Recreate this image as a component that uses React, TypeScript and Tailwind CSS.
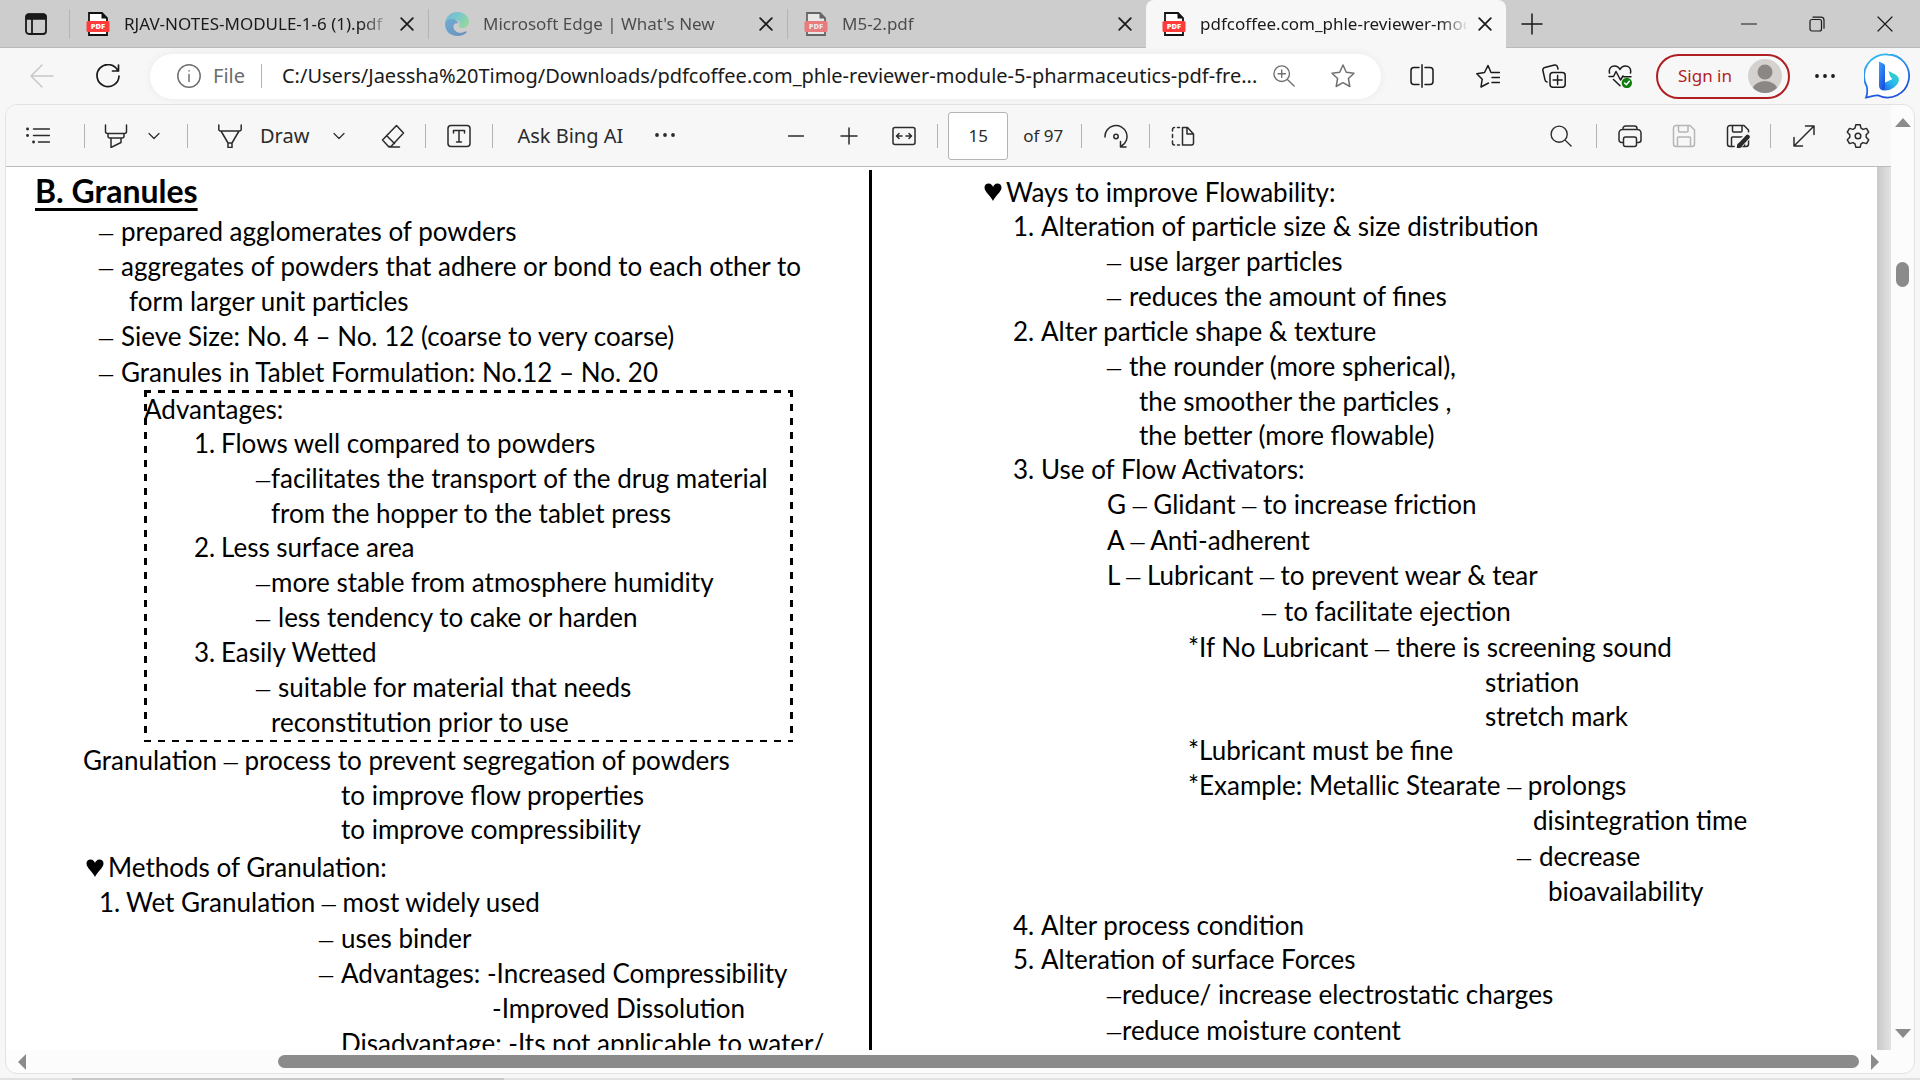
import type { ReactNode } from 'react';

type IconProps = { children: ReactNode; className?: string; box?: string };

const Icon = ({ children, className = 'size-6', box = '0 0 24 24' }: IconProps) => (
  <svg
    viewBox={box}
    fill="none"
    stroke="currentColor"
    strokeWidth="1.5"
    strokeLinecap="round"
    strokeLinejoin="round"
    aria-hidden="true"
    className={`${className} shrink-0`}
  >
    {children}
  </svg>
);

const CloseIcon = () => (
  <Icon className="size-3.5">
    <path d="M2 2l20 20M22 2L2 22" strokeWidth="3" />
  </Icon>
);

const Chevron = () => (
  <Icon className="size-3" box="0 0 12 12">
    <path d="M1 3.5l5 5 5-5" strokeWidth="1.2" />
  </Icon>
);

const PdfIcon = () => (
  <svg viewBox="0 0 24 24" className="size-6 shrink-0" aria-hidden="true">
    <path d="M3 1h13l5 5v17H3z" fill="#fff" stroke="#111" strokeWidth="1.8" />
    <path d="M15.500 1v5.500H21z" fill="#111" />
    <rect x="0.5" y="9" width="23" height="11" rx="1.5" fill="#ff3b3b" />
    <text x="12" y="17" textAnchor="middle" fontSize="7.5" fontWeight="800" fontFamily="Open Sans, sans-serif" fill="#fff">
      PDF
    </text>
  </svg>
);

const EdgeIcon = () => (
  <svg viewBox="0 0 24 24" className="size-6 shrink-0" aria-hidden="true">
    <defs>
      <linearGradient id="edgeTop" x1="0" y1="0" x2="1" y2="0.6">
        <stop offset="0" stopColor="#2d9fdc" />
        <stop offset="0.5" stopColor="#36c3cf" />
        <stop offset="1" stopColor="#66e07a" />
      </linearGradient>
      <linearGradient id="edgeLow" x1="0" y1="0" x2="1" y2="1">
        <stop offset="0" stopColor="#2394dc" />
        <stop offset="1" stopColor="#1c5ba5" />
      </linearGradient>
    </defs>
    <path d="M0 11.500C1 4 6 0 12 0c7 0 12 4.500 12 9.500 0 4-3 6.500-6.500 6.500-3 0-4.200-1-3.500-2 1.500-2.500.5-6-4-6C5 8 1.500 9 0 11.500z" fill="url(#edgeTop)" />
    <path d="M0 12c.5-4 4.500-5.500 8-5 3 .4 5 2.500 5 4.500-3-1-5 1-4.500 4 .7 4 5 6 9 5 2.500-.7 4.500-1.500 4.500-.5-2 2.700-5.500 4-9.500 4C5 24 0 19 0 12z" fill="url(#edgeLow)" />
  </svg>
);

const BingIcon = () => (
  <svg viewBox="0 0 46 46" className="size-[46px] shrink-0" aria-hidden="true">
    <defs>
      <linearGradient id="bingRing" x1="0" y1="0" x2="0.4" y2="1">
        <stop offset="0" stopColor="#35c5f5" />
        <stop offset="1" stopColor="#1d50dc" />
      </linearGradient>
      <linearGradient id="bingStem" x1="0" y1="0" x2="0.6" y2="1">
        <stop offset="0" stopColor="#38a5ff" />
        <stop offset="1" stopColor="#1c50dd" />
      </linearGradient>
      <linearGradient id="bingBowl" x1="1" y1="0" x2="0" y2="1">
        <stop offset="0" stopColor="#36dfb9" />
        <stop offset="0.5" stopColor="#27b7ee" />
        <stop offset="1" stopColor="#1b53dd" />
      </linearGradient>
    </defs>
    <path d="M23.500 1.500a21.500 21.500 0 1 1-9 41c-4-.5-8 1.500-12.500 2 1.800-4 1.500-7 .8-11A21.500 21.500 0 0 1 23.500 1.500z" fill="#fff" stroke="url(#bingRing)" strokeWidth="1.8" />
    <path d="M24.500 18l5.500 2.800c4.500 2 6 5.200 4.200 9-2.600 4.700-9 8.200-13.700 7.700-3-.5-4.500-3-4.500-5.500l12.500-6c-2-1.500-3-4-4-8z" fill="url(#bingBowl)" />
    <path d="M15 8.500l4.500 2.200c1 .5 1.500 1.300 1.500 2.500V33c0 2-.5 3.500-1.500 4.500-3-.2-4.500-2.300-4.500-4.500z" fill="url(#bingStem)" />
  </svg>
);

const Sep = ({ className = '' }: { className?: string }) => (
  <div className={`h-6 w-px shrink-0 bg-[#b4b4b4] ${className}`} />
);

type TabProps = { title: string; icon: ReactNode; width: string; dim?: boolean };

const Tab = ({ title, icon, width, dim }: TabProps) => (
  <div className={`flex h-full shrink-0 items-center pl-4 ${width}`}>
    <span className={dim ? 'opacity-55' : ''}>{icon}</span>
    <span
      className={`ml-3.5 min-w-0 flex-1 overflow-hidden bg-clip-text whitespace-nowrap text-transparent ${
        dim ? 'bg-[#4a4a4a]' : 'bg-linear-to-r from-[#1a1a1a] from-90% to-[#1a1a1a]/10'
      }`}
    >
      {title}
    </span>
    <button type="button" aria-label={`Close ${title}`} className="mr-3.5 ml-3 shrink-0 text-[#1a1a1a]">
      <CloseIcon />
    </button>
  </div>
);

const TabStrip = () => (
  <header className="flex h-12 shrink-0 items-stretch bg-[#cdcdcd] text-[17px] text-[#1a1a1a] shadow-[inset_0_-1px_0_#b9b9b9]">
    <button type="button" aria-label="Tab actions menu" className="flex w-[69px] shrink-0 items-center pl-6">
      <Icon>
        <rect x="2" y="2.500" width="20" height="19.500" rx="3" strokeWidth="1.8" />
        <path d="M2 7V5a3 3 0 0 1 3-3h14a3 3 0 0 1 3 3v2z" fill="currentColor" />
        <path d="M8 7v15" strokeWidth="1.8" />
      </Icon>
    </button>
    <Sep className="h-[30px] self-center bg-[#808080]" />
    <Tab title="RJAV-NOTES-MODULE-1-6 (1).pdf" icon={<PdfIcon />} width="w-[358px]" />
    <Sep className="h-[30px] self-center bg-[#808080]" />
    <Tab title="Microsoft Edge | What's New" icon={<EdgeIcon />} width="w-[358px]" dim />
    <Sep className="h-[30px] self-center bg-[#808080]" />
    <Tab title="M5-2.pdf" icon={<PdfIcon />} width="w-[358px]" dim />
    <div className="h-full shrink-0 rounded-t-lg bg-[#f7f7f7]">
      <Tab title="pdfcoffee.com_phle-reviewer-module" icon={<PdfIcon />} width="w-[360px]" />
    </div>
    <button type="button" aria-label="New tab" className="ml-3.5 shrink-0">
      <Icon>
        <path d="M12 2v20M2 12h20" />
      </Icon>
    </button>
    <div className="ml-auto flex items-center gap-[52px] pr-[27px]">
      <button type="button" aria-label="Minimize">
        <Icon className="size-4" box="0 0 16 16">
          <path d="M0 8h16" strokeWidth="1.2" />
        </Icon>
      </button>
      <button type="button" aria-label="Restore">
        <Icon className="size-4" box="0 0 16 16">
          <rect x="1" y="3.500" width="11.500" height="11.500" rx="2" strokeWidth="1.2" />
          <path d="M4 1.200h8a3 3 0 0 1 3 3v8" strokeWidth="1.2" />
        </Icon>
      </button>
      <button type="button" aria-label="Close window">
        <Icon className="size-4" box="0 0 16 16">
          <path d="M1 1l14 14M15 1L1 15" strokeWidth="1.2" />
        </Icon>
      </button>
    </div>
  </header>
);

const starPath = 'M12 1l3.300 7.200 7.700 1-5.600 5.300 1.400 8L12 18.700 5.200 22.500l1.400-8L1 9.200l7.700-1z';

const AddressRow = () => (
  <div className="flex h-14 shrink-0 items-center pr-2.5 pl-[30px] text-[#1a1a1a]">
    <button type="button" aria-label="Back" className="text-[#c8c8c8]">
      <Icon>
        <path d="M23 12H1M12 1L1 12l11 11" />
      </Icon>
    </button>
    <button type="button" aria-label="Refresh" className="ml-[42px]">
      <Icon>
        <path d="M22 7A11 11 0 1 0 23 12M22.500 1v6h-6" strokeWidth="1.7" />
      </Icon>
    </button>
    <div className="ml-[30px] flex h-[45px] min-w-0 flex-1 items-center rounded-full bg-white pr-[26px] pl-[27px] shadow-[0_0_8px_rgba(0,0,0,0.06)]">
      <Icon className="size-6 text-[#707070]">
        <circle cx="12" cy="12" r="11.200" />
        <path d="M12 10.500v7M12 6.800v.2" />
      </Icon>
      <span className="ml-3 text-xl text-[#6b6b6b]">File</span>
      <Sep className="ml-4 bg-[#8c8c8c]" />
      <input
        aria-label="Address"
        defaultValue="C:/Users/Jaessha%20Timog/Downloads/pdfcoffee.com_phle-reviewer-module-5-pharmaceutics-pdf-fre..."
        className="ml-5 min-w-0 flex-1 bg-transparent text-xl outline-none"
      />
      <button type="button" aria-label="Zoom" className="ml-4 text-[#707070]">
        <Icon className="size-[22px]">
          <circle cx="9.500" cy="9.500" r="8.500" />
          <path d="M16 16l7 7M9.500 5.500v8M5.500 9.500h8" />
        </Icon>
      </button>
      <button type="button" aria-label="Add to favorites" className="ml-9 text-[#707070]">
        <Icon>
          <path d={starPath} />
        </Icon>
      </button>
    </div>
    <div className="ml-[29px] flex shrink-0 items-center gap-[42px]">
      <button type="button" aria-label="Split screen">
        <Icon>
          <path d="M12 .8v22.400M9 3.500H4a3 3 0 0 0-3 3v11a3 3 0 0 0 3 3h5M15 3.500h5a3 3 0 0 1 3 3v11a3 3 0 0 1-3 3h-5" />
        </Icon>
      </button>
      <button type="button" aria-label="Favorites">
        <Icon>
          <path d="M16 8.500h7.500M16 13.500h7.500M16 18.500h7.500M15 8.500L12 1.500 8.500 8.500.8 9.800l5.400 5.400L5 23l7.500-4" />
        </Icon>
      </button>
      <button type="button" aria-label="Collections">
        <Icon>
          <rect x="8" y="8.500" width="15.200" height="14.800" rx="3" />
          <path d="M15.600 11.500v9M11.100 16h9M5 18a3 3 0 0 1-2-2.200L.9 6.500A2.500 2.500 0 0 1 2.800 3.500L12.500 1a2.500 2.500 0 0 1 3 2L16 5" />
        </Icon>
      </button>
      <button type="button" aria-label="Browser essentials">
        <Icon>
          <path d="M1.500 9C.5 4 3.500 2 6.500 2c2.500 0 4.500 1.500 5.500 3.500C13 3.500 15 2 17.500 2c3 0 6 2 5 7M1 12.500h4.500L8 7.500l4.500 8.500 2.500-4 1 .8h7M5.500 15.500l6.500 6.300" />
          <circle cx="18.800" cy="19" r="5.200" fill="#107c10" stroke="none" />
          <path d="M16.500 19l1.800 1.800 3-3.600" stroke="#fff" />
        </Icon>
      </button>
    </div>
    <button
      type="button"
      className="ml-6 flex h-[45px] shrink-0 items-center gap-4 rounded-full border-2 border-[#b01e22] pr-1.5 pl-5 text-[17px] text-[#b01e22]"
    >
      Sign in
      <svg viewBox="0 0 34 34" className="size-[34px]" aria-hidden="true">
        <clipPath id="avatarClip">
          <circle cx="17" cy="17" r="17" />
        </clipPath>
        <circle cx="17" cy="17" r="17" fill="#d4d1ce" />
        <circle cx="17" cy="13" r="7.500" fill="#8b8785" />
        <ellipse cx="17" cy="31" rx="12.500" ry="9" fill="#8b8785" clipPath="url(#avatarClip)" />
      </svg>
    </button>
    <button type="button" aria-label="Settings and more" className="ml-[23px] shrink-0">
      <Icon>
        <g fill="currentColor" stroke="none">
          <circle cx="4" cy="12" r="1.900" />
          <circle cx="12" cy="12" r="1.900" />
          <circle cx="20" cy="12" r="1.900" />
        </g>
      </Icon>
    </button>
    <button type="button" aria-label="Discover" className="ml-[27px] shrink-0">
      <BingIcon />
    </button>
  </div>
);

const floppyPath =
  'M1.500 4A2.500 2.500 0 0 1 4 1.500h14l4.500 4.500v14a2.500 2.500 0 0 1-2.500 2.500H4A2.500 2.500 0 0 1 1.500 20zM6.500 1.500V7a1 1 0 0 0 1 1H15a1 1 0 0 0 1-1V1.500M5.500 22.500V14a1 1 0 0 1 1-1h11a1 1 0 0 1 1 1v8.500';

const PdfToolbar = () => (
  <div className="flex h-[62px] shrink-0 items-center border-b border-[#bbbbbb] bg-[#f7f7f7] pr-[21px] pl-5 text-xl text-[#2b2b2b]">
    <button type="button" aria-label="Contents">
      <Icon>
        <path d="M7.500 5h16M7.500 11.500h16M12.500 18h11" />
        <path d="M1.500 5h.1M1.500 11.500h.1M7.500 18h.1" strokeWidth="2.8" />
      </Icon>
    </button>
    <Sep className="ml-[34px]" />
    <button type="button" aria-label="Highlight" className="ml-[19px]">
      <Icon>
        <path d="M1.500 1v6.500a2 2 0 0 0 2 2h17a2 2 0 0 0 2-2V1M4 9.500V12a2 2 0 0 0 2 2h12a2 2 0 0 0 2-2V9.500M7 14v9.500l10-5V14" />
      </Icon>
    </button>
    <button type="button" aria-label="Highlight colors" className="ml-5">
      <Chevron />
    </button>
    <Sep className="ml-[27px]" />
    <button type="button" className="ml-[30px] flex items-center gap-[18px]">
      <Icon>
        <path d="M.8 1v4.500a1.500 1.500 0 0 0 1.500 1.500h19.400a1.500 1.500 0 0 0 1.500-1.500V1M3 7l7 12v4.500h4V19l7-12M10 19h4" />
      </Icon>
      Draw
    </button>
    <button type="button" aria-label="Pen options" className="ml-6">
      <Chevron />
    </button>
    <button type="button" aria-label="Erase" className="ml-9">
      <Icon>
        <path d="M15.500 1.500l7 7.500L10 22.500H7.500L1.500 16zM5.500 11.500l8 8M8 23h10.500" />
      </Icon>
    </button>
    <Sep className="ml-5" />
    <button type="button" aria-label="Add text" className="ml-[21px]">
      <Icon>
        <rect x="1" y="1.500" width="22" height="21" rx="3" />
        <path d="M6.500 9V6.500h11V9M12 6.500v11.500M9.500 18h5" />
      </Icon>
    </button>
    <Sep className="ml-[21px]" />
    <button type="button" className="ml-6">Ask Bing AI</button>
    <button type="button" aria-label="More tools" className="ml-[30px]">
      <Icon>
        <g fill="currentColor" stroke="none">
          <circle cx="4" cy="11" r="1.900" />
          <circle cx="12" cy="11" r="1.900" />
          <circle cx="20" cy="11" r="1.900" />
        </g>
      </Icon>
    </button>
    <button type="button" aria-label="Zoom out" className="ml-[111px]">
      <Icon className="size-4" box="0 0 16 16">
        <path d="M.5 8h15" />
      </Icon>
    </button>
    <button type="button" aria-label="Zoom in" className="ml-9">
      <Icon className="size-[18px]" box="0 0 18 18">
        <path d="M1 9h16M9 1v16" />
      </Icon>
    </button>
    <button type="button" aria-label="Fit to width" className="ml-[34px]">
      <Icon>
        <rect x="1" y="3.500" width="22" height="17" rx="2" />
        <path d="M4.500 12H10M14 12h5.500M7 9.500L4.500 12 7 14.500M17 9.500l2.500 2.500-2.500 2.500" />
      </Icon>
    </button>
    <Sep className="ml-[21px]" />
    <input
      aria-label="Page number"
      defaultValue="15"
      className="ml-2.5 h-12 w-[60px] rounded-[3px] border border-[#b4b4b4] bg-white text-center text-[17px] outline-none"
    />
    <span className="ml-[15px] text-[17px]">of 97</span>
    <Sep className="ml-[18px]" />
    <button type="button" aria-label="Rotate" className="ml-[22px]">
      <Icon>
        <path d="M1 13A11 11 0 1 1 17.500 22M16.500 17.500V23H22" />
        <circle cx="12" cy="12.500" r="2.200" />
      </Icon>
    </button>
    <Sep className="ml-[21px]" />
    <button type="button" aria-label="Page view" className="ml-[21px]">
      <Icon>
        <path d="M11.500 3.500v17.500h9a2 2 0 0 0 2-2V10L16.500 3.500zM16 3.500V10h6.500" />
        <path d="M8.500 3.500h-2M3.500 3.500a2 2 0 0 0-2 2v1.500M1.500 10.500v3M1.500 17v2a2 2 0 0 0 2 2M6.500 21h2" />
      </Icon>
    </button>
    <button type="button" aria-label="Find" className="ml-auto">
      <Icon className="size-[22px]">
        <circle cx="10" cy="10" r="8.800" />
        <path d="M16.500 16.500l6.500 6.500" />
      </Icon>
    </button>
    <Sep className="ml-6" />
    <button type="button" aria-label="Print" className="ml-[21px]">
      <Icon>
        <path d="M5 18.500H3.500A2.500 2.500 0 0 1 1 16V9a3.500 3.500 0 0 1 3.500-3.500h15A3.500 3.500 0 0 1 23 9v7a2.500 2.500 0 0 1-2.500 2.500H19M5 5.500v-1a2.500 2.500 0 0 1 2.500-2.500h9A2.500 2.500 0 0 1 19 4.500v1" />
        <rect x="5.500" y="13" width="13" height="9.500" rx="2" />
      </Icon>
    </button>
    <button type="button" aria-label="Save" className="ml-[30px] text-[#b5b5b5]">
      <Icon>
        <path d={floppyPath} />
      </Icon>
    </button>
    <button type="button" aria-label="Save as" className="ml-[30px]">
      <Icon>
        <path d={floppyPath} />
        <path d="M22 12l-9 9-1.500 4" stroke="#f7f7f7" strokeWidth="7" />
        <path d="M21.500 13l-8 8.500" strokeWidth="4.5" />
        <path d="M11.500 23.500l1-3.500 2.500 2.500z" fill="currentColor" />
      </Icon>
    </button>
    <Sep className="ml-5" />
    <button type="button" aria-label="Full screen" className="ml-[21px]">
      <Icon>
        <path d="M2 22L22 2M13.500 2H22v8.500M2 13.500V22h8.500" />
      </Icon>
    </button>
    <button type="button" aria-label="Settings" className="ml-[30px]">
      <Icon>
        <circle cx="12" cy="12" r="2.800" />
        <path d="M9.800.8h4.400l.8 3.400 2 1.200 3.500-1 2.200 3.800-2.500 2.600v2.400l2.500 2.600-2.200 3.800-3.500-1-2 1.200-.8 3.400H9.800L9 19.800l-2-1.200-3.500 1-2.200-3.800 2.500-2.600v-2.400L1.300 8.200l2.200-3.800 3.500 1 2-1.200z" />
      </Icon>
    </button>
  </div>
);

// `tall` lines carry a dash glyph and get a little more leading
type LineProps = { indent: string; children: ReactNode; mark?: string; gap?: string; size?: 'tall' | 'mid' };

const Line = ({ indent, children, mark, gap = 'w-[22px]', size }: LineProps) => (
  <p
    className={`flex whitespace-pre ${indent} ${
      size === 'tall' ? 'h-9 leading-9' : size === 'mid' ? 'h-[35px] leading-[35px]' : 'h-[34px] leading-[34px]'
    }`}
  >
    {mark && <span className={`${gap} shrink-0`}>{mark === '–' ? <Dash /> : mark}</span>}
    <span>{children}</span>
  </p>
);

const Dash = () => <span className="font-['Liberation_Serif',serif] text-[28px] leading-none">–</span>;

const Heart = () => (
  <svg viewBox="0 0 18 18" className="mr-1 size-[18px] shrink-0" aria-label="heart">
    <path d="M9 18C7 13 .5 9 .5 4.500.5 2 2.300.5 4.500.5 7 .5 8.500 2.500 9 4 9.500 2.500 11 .5 13.500.5c2.200 0 4 1.500 4 4C17.500 9 11 13 9 18z" fill="#000" />
  </svg>
);

const dashedFrame =
  'bg-[repeating-linear-gradient(90deg,#000_0_7px,transparent_7px_14px),repeating-linear-gradient(90deg,#000_0_7px,transparent_7px_14px),repeating-linear-gradient(#000_0_7px,transparent_7px_14px),repeating-linear-gradient(#000_0_7px,transparent_7px_14px)] bg-no-repeat [background-position:top,bottom,left,right] [background-size:100%_3px,100%_2px,3px_100%,3px_100%]';

const LeftColumn = () => (
  <section className="w-[863px] shrink-0">
    <h1 className="ml-[29px] h-[47px] pt-1 text-[32px] leading-[40px] font-bold underline decoration-[3px] underline-offset-[5px]">
      B. Granules
    </h1>
    <Line indent="pl-[93px]" mark="–">prepared agglomerates of powders</Line>
    <Line indent="pl-[93px]" mark="–" size="tall">aggregates of powders that adhere or bond to each other to</Line>
    <Line indent="pl-[123px]">form larger unit particles</Line>
    <Line indent="pl-[93px]" mark="–" size="tall">Sieve Size: No. 4 – No. 12 (coarse to very coarse)</Line>
    <Line indent="pl-[93px]" mark="–" size="tall">Granules in Tablet Formulation: No.12 – No. 20</Line>
    <div className={`mr-[76px] ml-[138px] h-[352px] pt-0.5 ${dashedFrame}`}>
      <Line indent="pl-0">Advantages:</Line>
      <Line indent="pl-[50px]" mark="1." gap="w-[27px]">Flows well compared to powders</Line>
      <Line indent="pl-[112px]" mark="–" gap="w-[15px]" size="tall">facilitates the transport of the drug material</Line>
      <Line indent="pl-[127px]">from the hopper to the tablet press</Line>
      <Line indent="pl-[50px]" mark="2." gap="w-[27px]">Less surface area</Line>
      <Line indent="pl-[112px]" mark="–" gap="w-[15px]" size="tall">more stable from atmosphere humidity</Line>
      <Line indent="pl-[112px]" mark="–" size="mid">less tendency to cake or harden</Line>
      <Line indent="pl-[50px]" mark="3." gap="w-[27px]" size="mid">Easily Wetted</Line>
      <Line indent="pl-[112px]" mark="–" size="mid">suitable for material that needs</Line>
      <Line indent="pl-[127px]">reconstitution prior to use</Line>
    </div>
    <Line indent="pl-[77px]" size="tall">Granulation <Dash /> process to prevent segregation of powders</Line>
    <Line indent="pl-[335px]">to improve flow properties</Line>
    <Line indent="pl-[335px]">to improve compressibility</Line>
    <div className="mt-1 flex items-center pl-20">
      <Heart />
      <Line indent="pl-0" size="mid">Methods of Granulation:</Line>
    </div>
    <Line indent="pl-[93px]" mark="1." gap="w-[27px]" size="mid">Wet Granulation <Dash /> most widely used</Line>
    <Line indent="pl-[313px]" mark="–" size="tall">uses binder</Line>
    <Line indent="pl-[313px]" mark="–" size="mid">Advantages: -Increased Compressibility</Line>
    <Line indent="pl-[486px]" size="mid">-Improved Dissolution</Line>
    <Line indent="pl-[335px]">Disadvantage: -Its not applicable to water/</Line>
  </section>
);

const RightColumn = () => (
  <section className="pt-2">
    <div className="flex items-center pl-[112px]">
      <Heart />
      <Line indent="pl-0">Ways to improve Flowability:</Line>
    </div>
    <Line indent="pl-[141px]" mark="1." gap="w-7">{'Alteration of particle size & size distribution'}</Line>
    <Line indent="pl-[235px]" mark="–" size="tall">use larger particles</Line>
    <Line indent="pl-[235px]" mark="–" size="mid">reduces the amount of fines</Line>
    <Line indent="pl-[141px]" mark="2." gap="w-7">{'Alter particle shape & texture'}</Line>
    <Line indent="pl-[235px]" mark="–" size="tall">the rounder (more spherical),</Line>
    <Line indent="pl-[267px]">the smoother the particles ,</Line>
    <Line indent="pl-[267px]">the better (more flowable)</Line>
    <Line indent="pl-[141px]" mark="3." gap="w-7" size="mid">Use of Flow Activators:</Line>
    <Line indent="pl-[235px]" size="mid">G <Dash /> Glidant <Dash /> to increase friction</Line>
    <Line indent="pl-[235px]" size="tall">A <Dash /> Anti-adherent</Line>
    <Line indent="pl-[235px]" size="mid">L <Dash /> Lubricant <Dash /> to prevent wear &amp; tear</Line>
    <Line indent="pl-[390px]" mark="–" size="tall">to facilitate ejection</Line>
    <Line indent="pl-[316px]" size="tall">*If No Lubricant <Dash /> there is screening sound</Line>
    <Line indent="pl-[613px]">striation</Line>
    <Line indent="pl-[613px]">stretch mark</Line>
    <Line indent="pl-[316px]">*Lubricant must be fine</Line>
    <Line indent="pl-[316px]" size="tall">*Example: Metallic Stearate <Dash /> prolongs</Line>
    <Line indent="pl-[661px]" size="mid">disintegration time</Line>
    <Line indent="pl-[645px]" mark="–" size="tall">decrease</Line>
    <Line indent="pl-[676px]">bioavailability</Line>
    <Line indent="pl-[141px]" mark="4." gap="w-7">Alter process condition</Line>
    <Line indent="pl-[141px]" mark="5." gap="w-7" size="mid">Alteration of surface Forces</Line>
    <Line indent="pl-[235px]" mark="–" gap="w-[15px]" size="mid">reduce/ increase electrostatic charges</Line>
    <Line indent="pl-[235px]" mark="–" gap="w-[15px]" size="tall">reduce moisture content</Line>
  </section>
);

const Arrow = ({ d }: { d: string }) => (
  <svg viewBox="0 0 16 16" className="size-4 shrink-0" aria-hidden="true">
    <path d={d} fill="#8b8b8b" />
  </svg>
);

export default function App() {
  return (
    <div className="flex h-screen w-full flex-col overflow-hidden bg-[#f7f7f7] font-['Noto_Sans',sans-serif]">
      <TabStrip />
      <AddressRow />
      <div className="mx-[5px] flex min-h-0 flex-1 overflow-hidden rounded-xl border border-[#e2e2e2] bg-[#fcfcfc]">
        <div className="flex min-w-0 flex-1 flex-col">
          <PdfToolbar />
          <main className="flex min-h-0 flex-1 overflow-hidden bg-white font-['Lato',sans-serif] text-[26px] text-black">
            <LeftColumn />
            <div className="mt-[3px] w-[3px] shrink-0 bg-black" />
            <div className="min-w-0 flex-1 overflow-hidden">
              <RightColumn />
            </div>
            <div className="w-3.5 shrink-0 bg-linear-to-r from-[#c9c9c9] to-[#e2e2e2]" />
          </main>
          <div className="flex h-[23px] shrink-0 items-center pr-2 pl-2">
            <Arrow d="M12 0v16L4 8z" />
            <div className="mr-2 ml-[248px] h-[13px] flex-1 rounded-full bg-[#8b8b8b]" />
            <Arrow d="M4 0v16l8-8z" />
          </div>
        </div>
        <div className="flex w-[23px] shrink-0 flex-col items-center pt-2.5 pb-8">
          <Arrow d="M0 12h16L8 3z" />
          <div className="mt-[131px] h-[25px] w-[13px] rounded-full bg-[#8b8b8b]" />
          <div className="flex-1" />
          <Arrow d="M0 4h16l-8 9z" />
        </div>
      </div>
      <footer className="mt-1 flex h-0.5 shrink-0 bg-[#e2e2e2]">
        <div className="ml-[72px] w-[432px] bg-[#c9c9c9]" />
      </footer>
    </div>
  );
}
